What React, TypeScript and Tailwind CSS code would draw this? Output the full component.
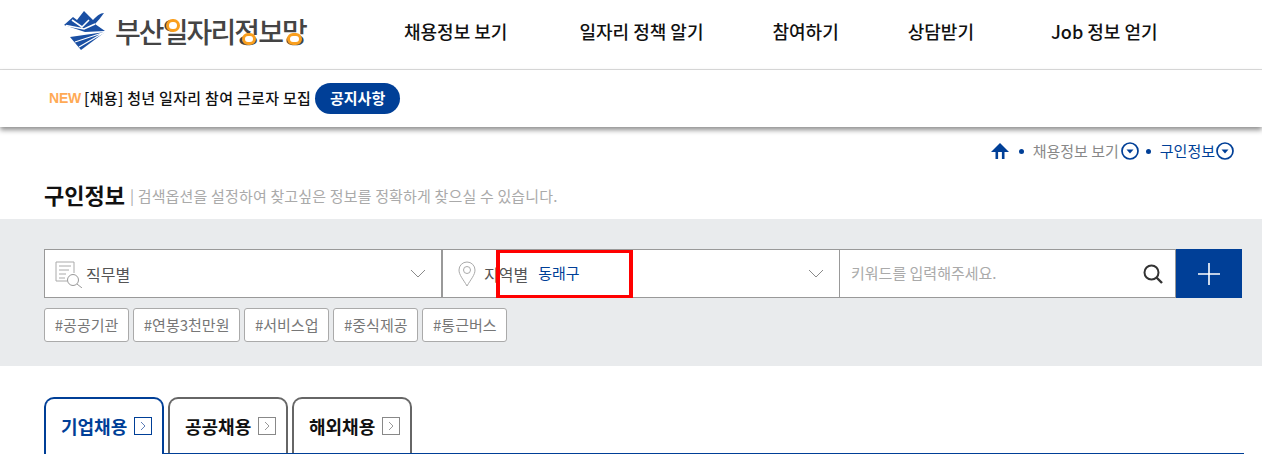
import React from "react";

const NAV = [
  { label: "채용정보 보기", cls: "ml-[98px]" },
  { label: "일자리 정책 알기", cls: "ml-[72px]" },
  { label: "참여하기", cls: "ml-[69px]" },
  { label: "상담받기", cls: "ml-[69px]" },
  { label: "Job 정보 얻기", cls: "ml-[77px]" },
];

const TAGS = ["#공공기관", "#연봉3천만원", "#서비스업", "#중식제공", "#통근버스"];

function Logo() {
  return (
    <svg width="44" height="41" viewBox="4 3 44 41" className="shrink-0" fill="#1a4fa3">
      <path d="M4 17 L13 9 L17 12 L24 3 L33 12 C37 8 40 5 44 5 C41 9 38 13 35 16 L45 23 L25 24 Z" />
      <path d="M12 12 L22 19 L29 12 M6 17.5 L24 21 L35 16" stroke="#fff" strokeWidth="1.6" fill="none" />
      <path d="M10 29 L45 24 L21 42 Z" />
      <path d="M45 24 L15 34 M45 24 L19 39" stroke="#fff" strokeWidth="1.3" fill="none" />
    </svg>
  );
}

function CircleDown() {
  return (
    <svg width="18" height="18" viewBox="0 0 18 18" className="shrink-0">
      <circle cx="9" cy="9" r="8" fill="#fff" stroke="#003f97" strokeWidth="1.7" />
      <path d="M5.5 7.5 H12.5 L9 11.5 Z" fill="#003f97" />
    </svg>
  );
}

function Chevron() {
  return (
    <svg width="16" height="9" viewBox="0 0 16 9" className="shrink-0">
      <path d="M1 1 L8 8 L15 1" fill="none" stroke="#8a8a8a" strokeWidth="1" />
    </svg>
  );
}

function TabArrow({ active }: { active?: boolean }) {
  const color = active ? "#003f97" : "#888888";
  return (
    <svg width="18" height="18" viewBox="0 0 18 18" className="shrink-0">
      <rect x="0.5" y="0.5" width="17" height="17" fill="#fff" stroke={color} />
      <path d="M7 5 L11 9 L7 13" fill="none" stroke={active ? "#5f7fb8" : "#999999"} strokeWidth="1" />
    </svg>
  );
}

export default function App() {
  return (
    <div className="w-[1262px] h-[476px] overflow-hidden bg-white font-['Noto_Sans_CJK_KR','Noto_Sans',sans-serif]">
      {/* header */}
      <div className="h-[70px] border-b border-[#dcdcdc] flex items-center pl-[64px] pb-[7px]">
        <div className="flex items-center gap-[7px] w-[242px]">
          <Logo />
          <span className="relative text-[28px] leading-none font-medium tracking-[-1.9px] text-[#444444] whitespace-nowrap">
            부산일자리정보망
            <span className="absolute left-[51px] top-[2px] w-[14px] h-[13px] rounded-full border-[3px] border-[#f99f1e] bg-white" />
            <span className="absolute left-[127px] top-[16px] w-[14px] h-[12px] rounded-full border-[3px] border-[#f99f1e] bg-white" />
            <span className="absolute left-[172px] top-[16px] w-[15px] h-[12px] rounded-full border-[3px] border-[#f99f1e] bg-white" />
          </span>
        </div>
        {NAV.map((n) => (
          <span key={n.label} className={`${n.cls} text-[18px] font-medium text-[#111111] whitespace-nowrap`}>
            {n.label}
          </span>
        ))}
      </div>

      {/* notice */}
      <div className="relative h-[57px] flex items-center pl-[49px] pb-[1px] bg-white shadow-[0_3px_5px_#8f8f8f]">
        <span className="text-[14px] font-bold text-[#ffaa55] mr-[3px] tracking-[-0.2px] font-['Liberation_Sans',sans-serif]">NEW</span>
        <span className="text-[15px] font-medium tracking-[0.3px] text-[#111111] whitespace-nowrap">[채용] 청년 일자리 참여 근로자 모집</span>
        <span className="ml-[4px] h-[31px] w-[85px] rounded-full bg-[#003f97] text-white text-[15px] font-bold flex items-center justify-center">
          공지사항
        </span>
      </div>

      {/* breadcrumb */}
      <div className="h-[50px] flex items-center justify-end pr-[28px] pb-[2px] text-[15px] whitespace-nowrap">
        <svg width="18" height="16" viewBox="0 0 18 16" className="mr-[10px]" fill="#003f97">
          <path d="M9 0 L18 9 H0 Z" />
          <rect x="4.5" y="8" width="2.6" height="8" />
          <rect x="10.9" y="8" width="2.6" height="8" />
        </svg>
        <span className="w-[5px] h-[5px] rounded-full bg-[#003f97] mr-[9px]" />
        <span className="text-[#888888] mr-[2px]">채용정보 보기</span>
        <CircleDown />
        <span className="w-[5px] h-[5px] rounded-full bg-[#003f97] ml-[7px] mr-[9px]" />
        <span className="text-[#003f97] mr-[1px]">구인정보</span>
        <CircleDown />
      </div>

      {/* title */}
      <div className="h-[42px] pl-[44px] flex items-start">
        <h1 className="text-[22px] leading-[34px] font-bold text-[#111111]">구인정보</h1>
        <span className="ml-[5px] mt-[2px] leading-[34px] text-[15px] tracking-[0.16px] text-[#aaaaaa] whitespace-nowrap">| 검색옵션을 설정하여 찾고싶은 정보를 정확하게 찾으실 수 있습니다.</span>
      </div>

      {/* search band */}
      <div className="relative h-[147px] bg-[#e9ebed] pt-[30px] pl-[44px]">
        <div className="flex h-[49px] w-[1198px]">
          <div className="w-[398px] bg-white border border-[#999999] flex items-center pl-[10px] pr-[15px]">
            <svg width="28" height="28" viewBox="0 0 28 28" className="shrink-0" fill="none" stroke="#aaaaaa" strokeWidth="1">
              <path d="M1 2 H19 V13 M1 2 V21 H12 M4 6 H16 M4 10 H14 M4 14 H11 M4 18 H10" />
              <circle cx="18" cy="20" r="5.5" stroke="#999999" />
              <path d="M22 24 L27 28" stroke="#999999" />
            </svg>
            <span className="ml-[3px] text-[16px] text-[#555555]">직무별</span>
            <span className="ml-auto"><Chevron /></span>
          </div>
          <div className="w-[398px] bg-white border-y border-r border-[#999999] flex items-center pl-[16px] pr-[15px] relative">
            <span className="absolute left-0 top-0 bottom-0 w-[1px] bg-[#999999]" />
            <svg width="18" height="26" viewBox="0 0 18 26" className="shrink-0" fill="none" stroke="#aaaaaa" strokeWidth="1">
              <path d="M9 25 C5 18 1 14 1 9 A8 8 0 0 1 17 9 C17 14 13 18 9 25 Z" />
              <circle cx="9" cy="9" r="3.5" />
            </svg>
            <span className="ml-[8px] text-[16px] text-[#555555]">지역별</span>
            <span className="ml-[10px] text-[15px] text-[#003f97]">동래구</span>
            <span className="ml-auto"><Chevron /></span>
          </div>
          <div className="flex-1 bg-white border-y border-r border-[#999999] flex items-center pl-[11px] pr-[12px]">
            <span className="text-[15px] text-[#aaaaaa]">키워드를 입력해주세요.</span>
            <svg width="20" height="20" viewBox="0 0 20 20" className="ml-auto shrink-0" fill="none" stroke="#333333">
              <circle cx="8.5" cy="8.5" r="7" strokeWidth="2" />
              <path d="M13.5 13.5 L19 19" strokeWidth="2.4" />
            </svg>
          </div>
          <button className="w-[66px] bg-[#003f97] flex items-center justify-center">
            <svg width="24" height="24" viewBox="0 0 24 24" stroke="#fff" strokeWidth="1.6">
              <path d="M12 1 V23 M1 12 H23" />
            </svg>
          </button>
        </div>
        <div className="flex gap-[4px] mt-[10px]">
          {TAGS.map((t) => (
            <span key={t} className="h-[34px] px-[9.75px] flex items-center bg-white border border-[#aaaaaa] rounded-[3px] text-[15px] text-[#777777] whitespace-nowrap">
              {t}
            </span>
          ))}
        </div>
        {/* highlight box */}
        <div className="absolute left-[496px] top-[31px] w-[137px] h-[48px] border-x-[4px] border-y-[3px] border-[#ff0000]" />
      </div>

      {/* tabs */}
      <div className="mt-[31px] ml-[44px] w-[1200px] h-[57px] border-b border-[#003f97] flex gap-[4px]">
        <div className="w-[120px] h-[57px] border-2 border-b-0 border-[#003f97] rounded-t-[10px] flex items-center pl-[15px] gap-[7px] pb-[1px] bg-white">
          <span className="text-[18px] font-bold text-[#003f97]">기업채용</span>
          <TabArrow active />
        </div>
        <div className="w-[120px] h-[56px] border-2 border-b-0 border-[#666666] rounded-t-[10px] flex items-center pl-[15px] gap-[7px] bg-white">
          <span className="text-[18px] font-bold text-[#111111]">공공채용</span>
          <TabArrow />
        </div>
        <div className="w-[120px] h-[56px] border-2 border-b-0 border-[#666666] rounded-t-[10px] flex items-center pl-[15px] gap-[7px] bg-white">
          <span className="text-[18px] font-bold text-[#111111]">해외채용</span>
          <TabArrow />
        </div>
      </div>
    </div>
  );
}
